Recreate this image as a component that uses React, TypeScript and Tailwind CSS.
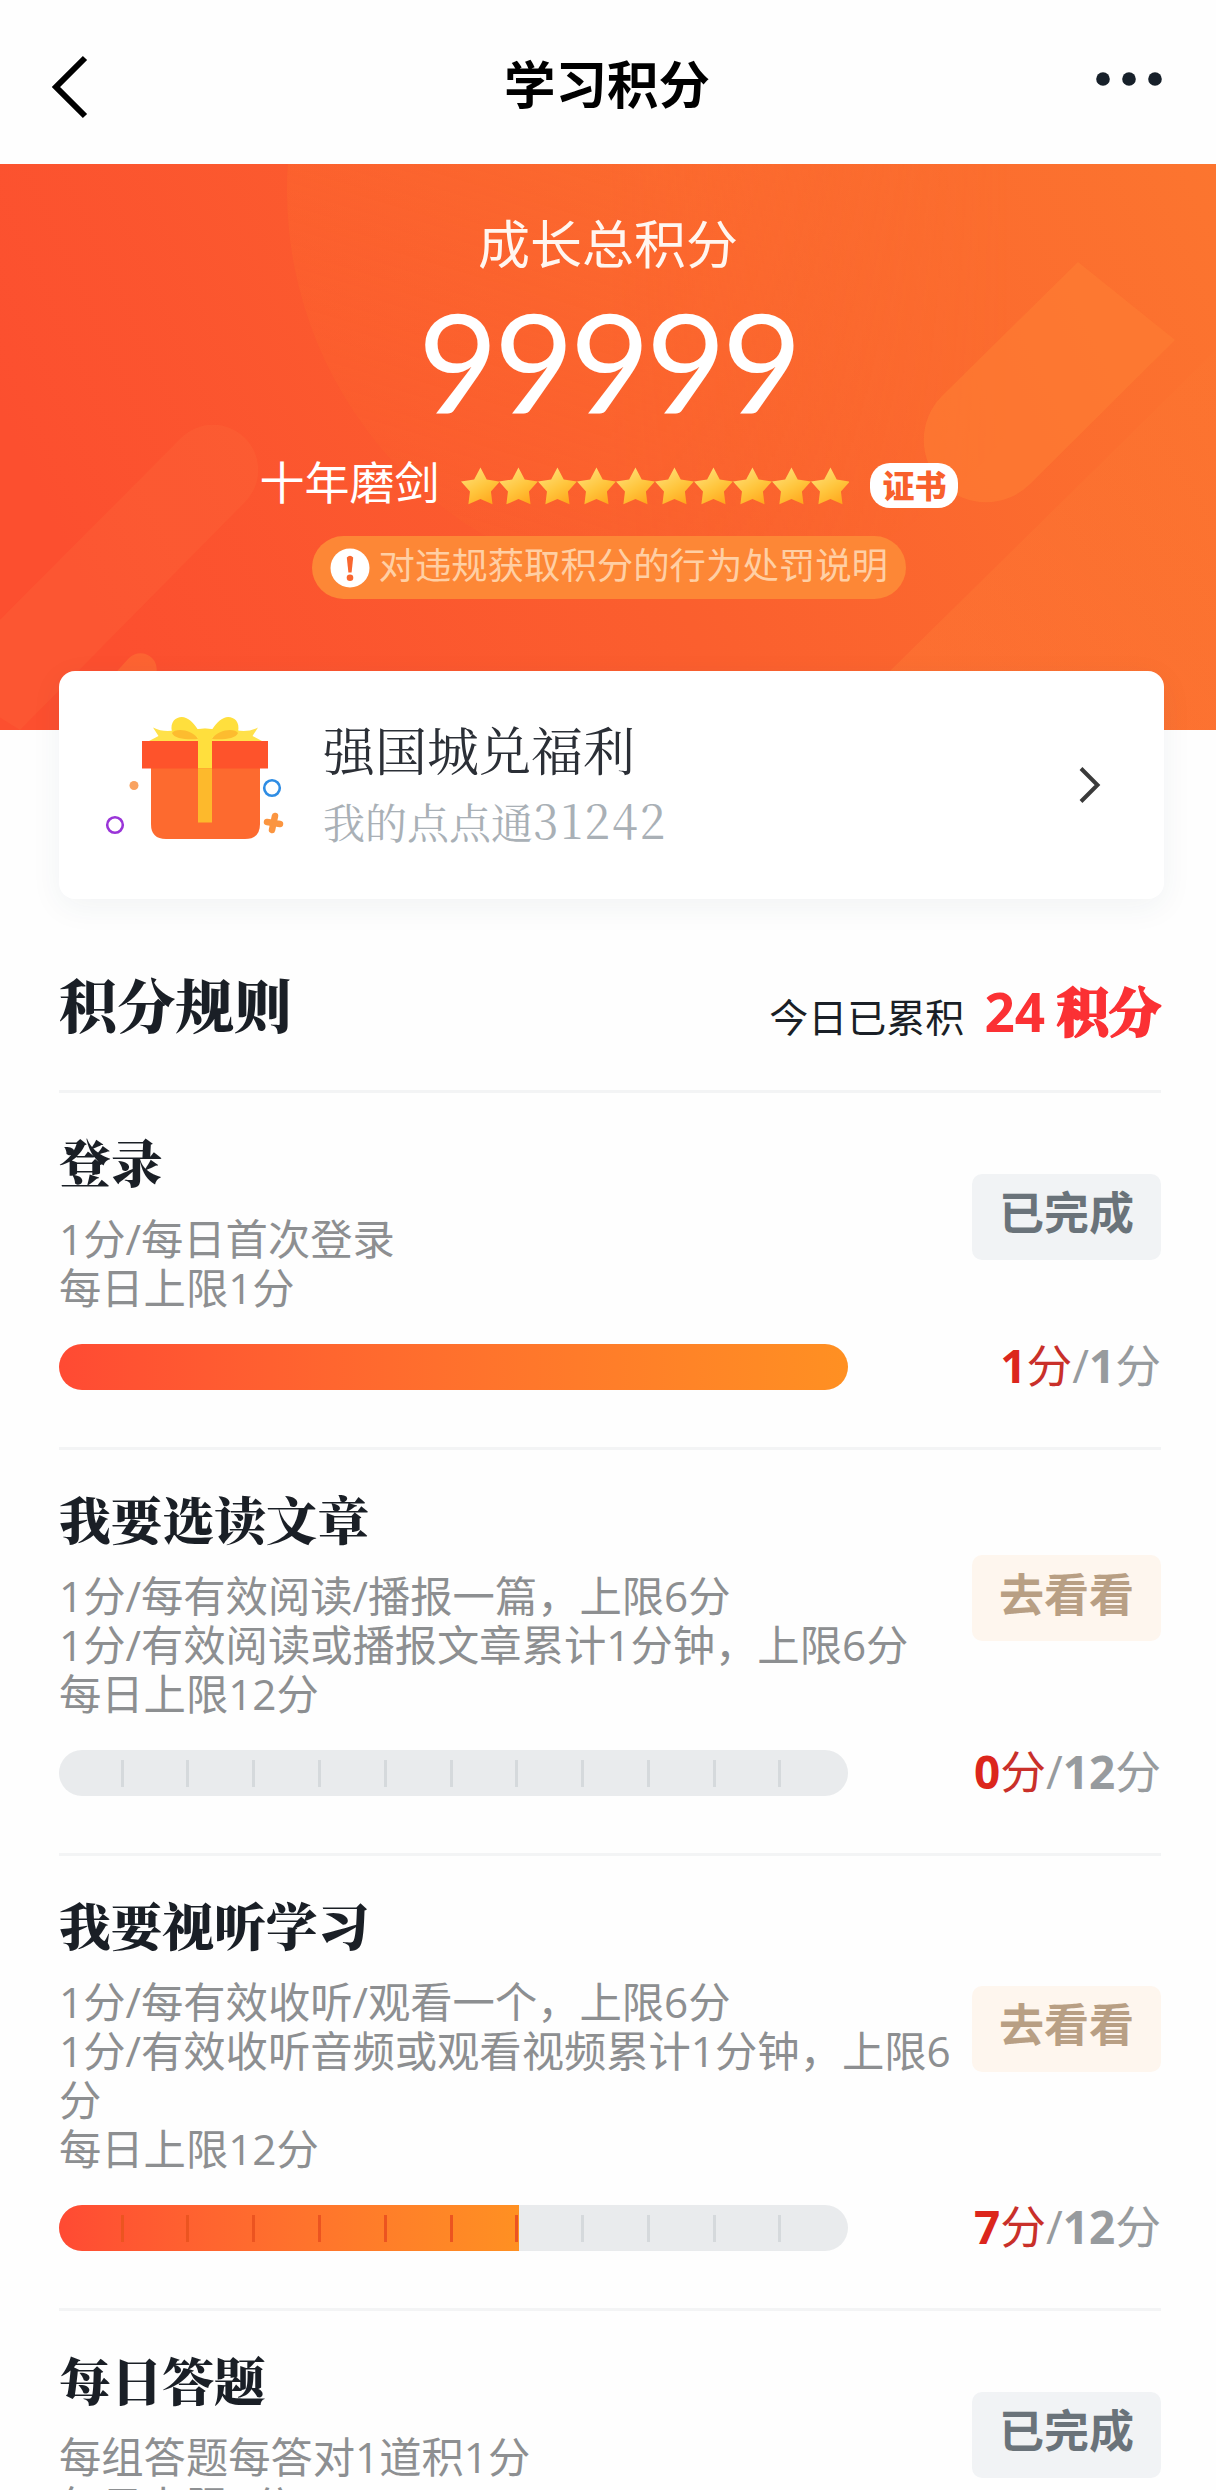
import React from "react";

const SANS = "font-['Open_Sans','Noto_Sans_CJK_SC',sans-serif]";
const SERIF = "font-['Noto_Serif_CJK_SC','Source_Han_Serif_SC','Noto_Sans_CJK_SC',serif]";

interface Rule {
  title: string;
  lines: string[];
  done: boolean;
  score: number;
  total: number;
}

const rules: Rule[] = [
  { title: "登录", lines: ["1分/每日首次登录", "每日上限1分"], done: true, score: 1, total: 1 },
  {
    title: "我要选读文章",
    lines: ["1分/每有效阅读/播报一篇，上限6分", "1分/有效阅读或播报文章累计1分钟，上限6分", "每日上限12分"],
    done: false,
    score: 0,
    total: 12,
  },
  {
    title: "我要视听学习",
    lines: ["1分/每有效收听/观看一个，上限6分", "1分/有效收听音频或观看视频累计1分钟，上限6分", "每日上限12分"],
    done: false,
    score: 7,
    total: 12,
  },
  { title: "每日答题", lines: ["每组答题每答对1道积1分", "每日上限5分"], done: true, score: 5, total: 5 },
];

const Header = () => (
  <header className="h-[164px] shrink-0 flex items-center justify-between pl-[50px] pr-[53px]">
    <svg className="w-[40px] h-[64px] mt-[10px]" viewBox="0 0 40 64" fill="none">
      <path d="M35 3 L6 32 L35 61" stroke="#000" strokeWidth="6" />
    </svg>
    <h1 className="text-[51.5px] leading-[64px] font-bold text-black mt-[4px] ml-[29px]">学习积分</h1>
    <svg className="w-[68px] h-[16px] mb-[6px]" viewBox="0 0 68 16" fill="#17202a">
      <circle cx="8" cy="8" r="6.8" />
      <circle cx="34" cy="8" r="6.8" />
      <circle cx="60" cy="8" r="6.8" />
    </svg>
  </header>
);

const HeroBackdrop = () => (
  <svg className="absolute inset-0 w-full h-full" viewBox="0 164 1216 566" preserveAspectRatio="none">
    <defs>
      <linearGradient id="disc" x1="0.6" y1="0" x2="0.3" y2="1">
        <stop offset="0" stopColor="#fd7a2e" stopOpacity="0.6" />
        <stop offset="1" stopColor="#fd6a2e" stopOpacity="0.15" />
      </linearGradient>
      <linearGradient id="discFade" x1="0" y1="0" x2="1" y2="0">
        <stop offset="0.4" stopColor="#fff" />
        <stop offset="0.9" stopColor="#000" />
      </linearGradient>
      <mask id="discMask">
        <rect x="287" y="164" width="802" height="566" fill="url(#discFade)" />
      </mask>
      <linearGradient id="band" x1="1" y1="0" x2="0" y2="1">
        <stop offset="0" stopColor="#ff8a3a" stopOpacity="0.05" />
        <stop offset="1" stopColor="#ff8a3a" stopOpacity="0.3" />
      </linearGradient>
    </defs>
    <circle cx="688" cy="190" r="401" fill="url(#disc)" mask="url(#discMask)" />
    <path d="M1078 262 L1175 340 L1030 484 A62 62 0 0 1 942 396 Z" fill="#fd7d32" fillOpacity="0.65" />
    <path d="M1216 350 L830 730 H1216 Z" fill="url(#band)" />
    <path d="M-60 680 L181 438 A45 45 0 0 1 245 502 L20 730 Z" fill="#ff8a4a" fillOpacity="0.12" />
    <path d="M100 690 L129 658 A16 16 0 0 1 152 681 L130 704 Z" fill="#ff8a3a" fillOpacity="0.35" />
  </svg>
);

const Star = () => (
  <svg className="w-[38.9px] h-[38px]" viewBox="0 0 39 38">
    <defs>
      <linearGradient id="gold" x1="0.2" y1="0" x2="0.8" y2="1">
        <stop offset="0" stopColor="#ffe07a" />
        <stop offset="0.55" stopColor="#ffc53c" />
        <stop offset="1" stopColor="#ffa51a" />
      </linearGradient>
    </defs>
    <path
      d="M19.5 0.5 L25.8 12.5 L39 14.6 L30 24.5 L31.6 37.4 L19.5 32 L7.4 37.4 L9 24.5 L0 14.6 L13.2 12.5 Z"
      fill="url(#gold)"
    />
  </svg>
);

const Hero = () => (
  <section className="relative h-[566px] shrink-0 bg-linear-[65deg] from-[#fc4f2f] from-10% via-[#fb5f2e] via-50% to-[#fc752f] text-white">
    <HeroBackdrop />
    <div className="relative flex flex-col items-center">
      <div className="mt-[46px] h-[68px] leading-[68px] text-[52px] text-[#fff6f0]">成长总积分</div>
      <div className="mt-[13px] h-[140px] leading-[140px] text-[138px] tracking-[-4px] font-[Lato]">99999</div>
      <div className="mt-[24px] h-[60px] flex items-center ml-[2px]">
        <span className="text-[45px] leading-[60px] mb-[4px]">十年磨剑</span>
        <span className="flex ml-[21px] mt-[2px]">
          {Array.from({ length: 10 }, (_, i) => (
            <Star key={i} />
          ))}
        </span>
        <span className="ml-[21px] w-[88px] h-[45px] rounded-[20px] bg-white text-[#f8602c] text-[32px] leading-[45px] font-black text-center">
          证书
        </span>
      </div>
      <div className="mt-[21px] w-[594px] h-[63px] rounded-full bg-[#fd8736] flex items-center pl-[18px] ml-[1px]">
        <svg className="w-[40px] h-[40px]" viewBox="0 0 40 40">
          <circle cx="20" cy="20" r="19.5" fill="#fff" />
          <path d="M16.8 9.5 Q20 6 23.2 9.5 L21.6 24.5 H18.4 Z" fill="#f9662f" />
          <circle cx="20" cy="29.8" r="3.3" fill="#f9662f" />
        </svg>
        <span className="ml-[9px] text-[36.4px] leading-[56px] mb-[6px] text-[#ffcfa4]">对违规获取积分的行为处罚说明</span>
      </div>
    </div>
  </section>
);

const Gift = () => (
  <svg className="w-[200px] h-[160px] mb-[10px]" viewBox="95 700 200 160">
    <path d="M151 765 H260 V824 Q260 839 245 839 H166 Q151 839 151 824 Z" fill="#fd6a2f" />
    <rect x="142" y="741" width="126" height="27.5" fill="#fe532b" />
    {/* ribbon tails */}
    <path d="M149 741 L158.5 736 L153 727.5 Q164 733 176 730 L198 729 Q205 728 212 729 L236 730 Q247 733 258 727.5 L252.5 736 L262 741 Z" fill="#ffe14a" />
    {/* bow loops */}
    <path d="M172 732 C169 719 180 715 186 718 C193 721 196 727 199 731 L198 736 L180 738 Z" fill="#ffdf3d" />
    <path d="M238 732 C241 719 230 715 224 718 C217 721 214 727 211 731 L212 736 L230 738 Z" fill="#ffdf3d" />
    <path d="M172 733 C175 728 192 729 198 739 C188 740 174 739 172 733 Z" fill="#fdbc2f" />
    <path d="M238 733 C235 728 218 729 212 739 C222 740 236 739 238 733 Z" fill="#fdbc2f" />
    <path d="M196 729.5 Q205 728 214 729.5 L212 739 V768.5 H198 V739 Z" fill="#ffdf3d" />
    <rect x="198" y="768.5" width="14" height="54" fill="#fdb92c" />
    <circle cx="134" cy="785.5" r="4.5" fill="#f9a260" />
    <circle cx="272" cy="788" r="7.8" fill="none" stroke="#2f8de4" strokeWidth="2.6" />
    <circle cx="115" cy="825" r="7.8" fill="none" stroke="#9a35d8" strokeWidth="2.6" />
    <path d="M275 816 L272 830 M267 822 L280 824" stroke="#fb9540" strokeWidth="6.5" strokeLinecap="round" />
  </svg>
);

const WelfareCard = () => (
  <section className="relative -mt-[59px] mx-[59px] w-[1105px] h-[228px] shrink-0 rounded-[16px] bg-white shadow-[0_8px_32px_rgba(40,60,90,0.06)] flex items-center pl-[36px] pr-[61px]">
    <Gift />
    <div className={`ml-[28px] flex-1 ${SERIF}`}>
      <div className="text-[52px] leading-[72px] text-[#2b2f36]">强国城兑福利</div>
      <div className="text-[42px] leading-[72px] text-[#a9b0b6]">
        我的点点通<span className="text-[46px] leading-[60px] tracking-[2px]">31242</span>
      </div>
    </div>
    <svg className="w-[26px] h-[42px]" viewBox="0 0 26 42" fill="none">
      <path d="M4 4.5 L20.5 21 L4 37.5" stroke="#3a3a3a" strokeWidth="4" />
    </svg>
  </section>
);

const ProgressBar = ({ score, total }: { score: number; total: number }) => (
  <div className="relative w-[789px] h-[46px] rounded-full bg-[#e9ebed] overflow-hidden">
    <div
      className="h-full bg-linear-to-r from-[#ff4a33] to-[#ff9022]"
      style={{ width: `${(score / total) * 100}%` }}
    />
    {Array.from({ length: total - 1 }, (_, i) => (
      <span
        key={i}
        className={`absolute top-[10px] w-[3px] h-[27px] ${i < score ? "bg-[#ec5420]" : "bg-[#d5d9dc]"}`}
        style={{ left: `calc(${((i + 1) / total) * 100}% - 4px)` }}
      />
    ))}
  </div>
);

const RuleItem = ({ rule }: { rule: Rule }) => (
  <section className="border-b-[3px] border-[#f3f4f5] pt-[27px] pb-[57px]">
    <div className="flex items-center">
      <div className="w-[900px] shrink-0">
        <h3 className={`text-[51.7px] leading-[82px] pb-[5px] font-black text-[#1a1f26] ${SERIF}`}>{rule.title}</h3>
        <div className="mt-[7px] mb-px text-[42.3px] leading-[49px] text-[#8d8f91]">
          {rule.lines.map((line) => (
            <p key={line} className="break-all">{line}</p>
          ))}
        </div>
      </div>
      <button
        className={`ml-[13px] w-[189px] h-[86px] rounded-[10px] pb-[7px] text-[45px] font-bold ${
          rule.done ? "bg-[#f1f3f5] text-[#6a737a]" : "bg-[#fef6ee] text-[#b89f84]"
        }`}
      >
        {rule.done ? "已完成" : "去看看"}
      </button>
    </div>
    <div className="mt-[31px] flex items-center justify-between">
      <ProgressBar score={rule.score} total={rule.total} />
      <div className="text-[45.8px] leading-[42px] h-[46px] text-[#979b9e]">
        <span className="text-[#c9302a]">
          <b className="text-[#dc261c]">{rule.score}</b>分
        </span>
        /<b>{rule.total}</b>分
      </div>
    </div>
  </section>
);

export default function App() {
  return (
    <div lang="zh-CN" className={`w-[1216px] h-[2490px] overflow-hidden bg-[#fefefe] flex flex-col ${SANS}`}>
      <Header />
      <Hero />
      <WelfareCard />
      <main className="w-[1102px] ml-[59px] shrink-0">
        <div className="h-[194px] border-b-[3px] border-[#f3f4f5] flex justify-between pt-[64px]">
          <h2 className={`text-[58.2px] leading-[80px] font-black text-[#1a1f26] ${SERIF}`}>积分规则</h2>
          <div className="flex items-baseline mt-[6px]">
            <span className="text-[39px] leading-[96px] text-[#1a1f26]">今日已累积</span>
            <span className="ml-[20px] text-[53px] leading-[60px] font-bold text-[#fb3134]">24</span>
            <span className={`ml-[12px] text-[52px] leading-[60px] font-black text-[#fb3134] [-webkit-text-stroke:2px_#fb3134] ${SERIF}`}>
              积分
            </span>
          </div>
        </div>
        {rules.map((rule) => (
          <RuleItem key={rule.title} rule={rule} />
        ))}
      </main>
    </div>
  );
}
